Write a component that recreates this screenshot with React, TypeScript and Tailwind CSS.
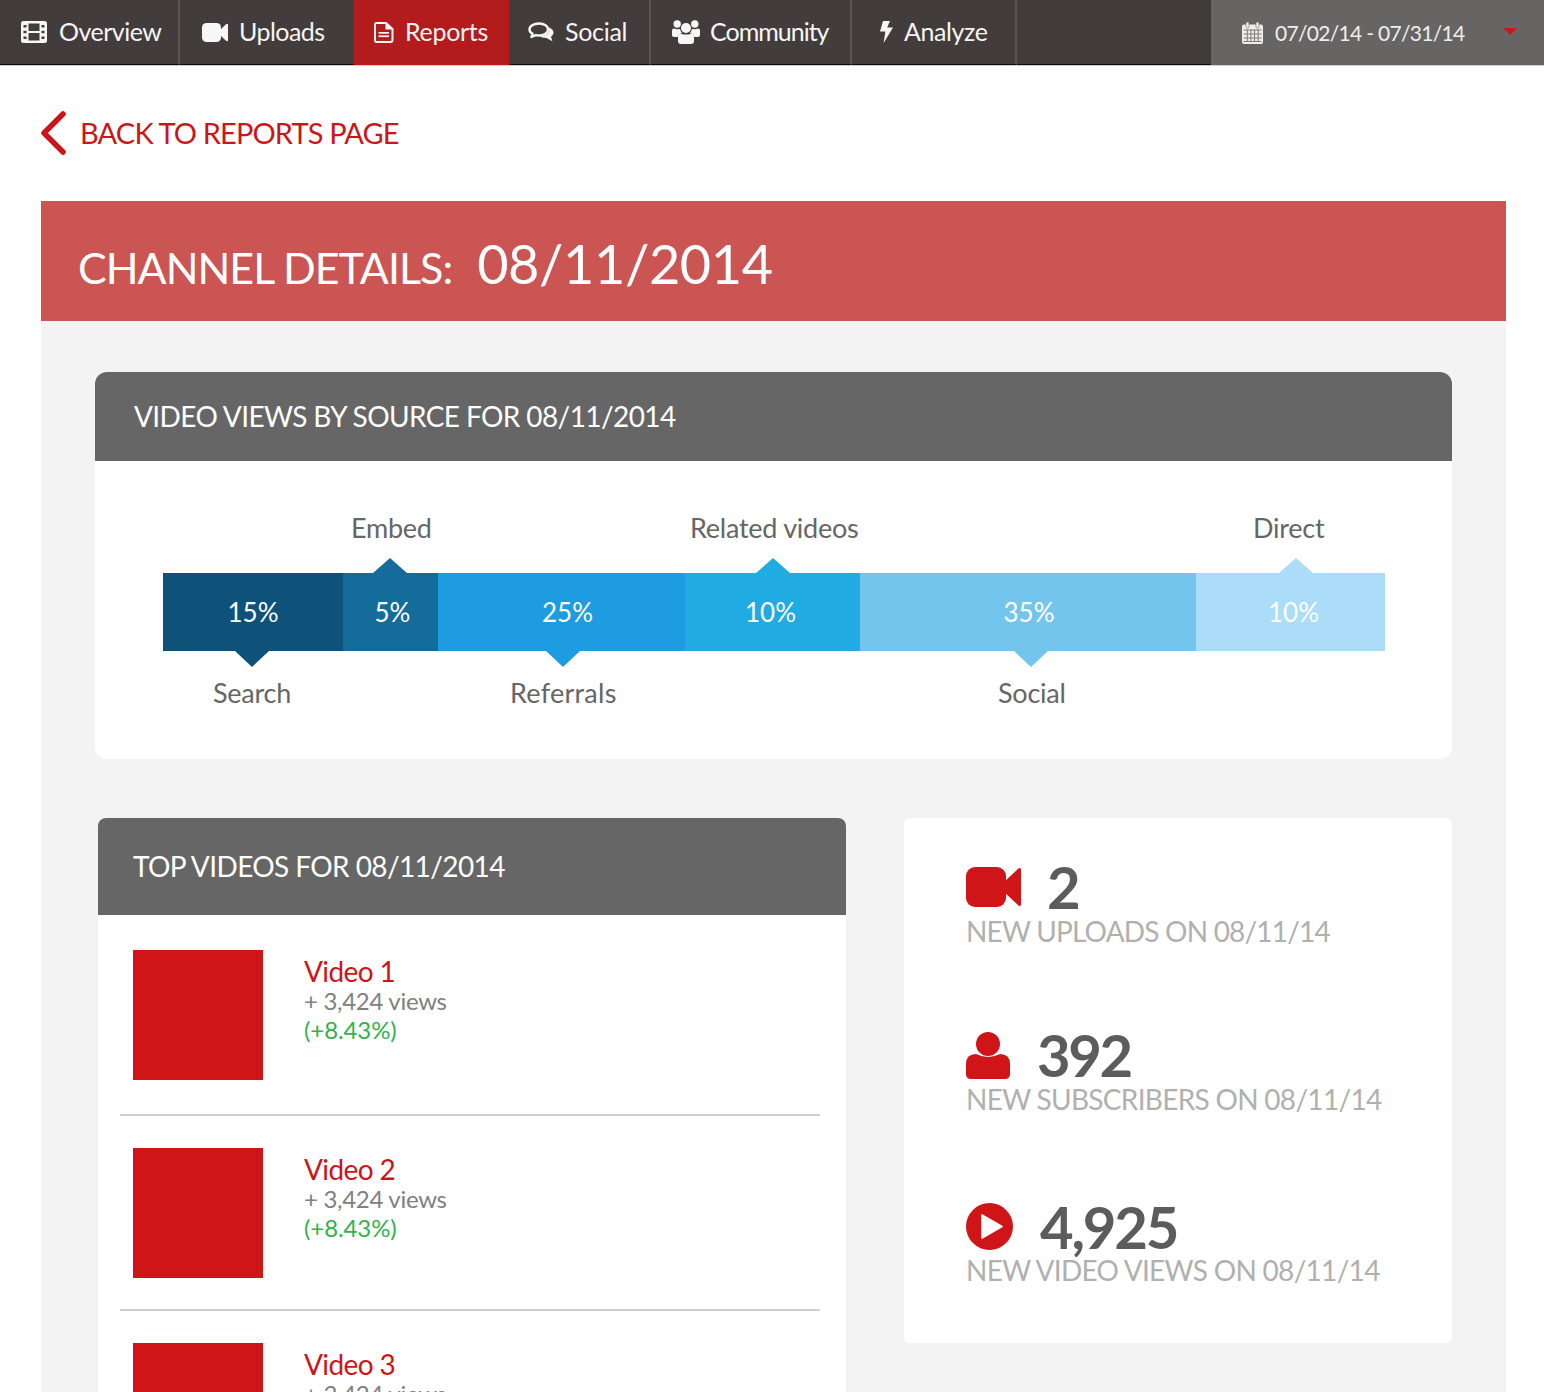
import React from "react";

const W = "#f7f7f7";
const D = "#423c3c";

const FilmIcon = () => (
  <svg width="26" height="22" viewBox="0 0 26 22" className="shrink-0">
    <rect x="0" y="0" width="26" height="22" rx="2.5" fill={W} />
    <rect x="7.5" y="2.5" width="11" height="7.5" fill={D} />
    <rect x="7.5" y="12" width="11" height="7.5" fill={D} />
    <rect x="2.5" y="4" width="3" height="2.5" fill={D} />
    <rect x="2.5" y="9.75" width="3" height="2.5" fill={D} />
    <rect x="2.5" y="15.5" width="3" height="2.5" fill={D} />
    <rect x="20.5" y="4" width="3" height="2.5" fill={D} />
    <rect x="20.5" y="9.75" width="3" height="2.5" fill={D} />
    <rect x="20.5" y="15.5" width="3" height="2.5" fill={D} />
  </svg>
);

const CamIcon = () => (
  <svg width="26" height="19" viewBox="0 0 26 19" className="shrink-0">
    <rect x="0" y="0" width="19" height="19" rx="4.5" fill={W} />
    <path d="M18 7 L24 1.2 Q26 0 26 2 L26 17 Q26 19 24 17.8 L18 12 Z" fill={W} />
  </svg>
);

const FileIcon = () => (
  <svg width="20" height="21" viewBox="0 0 20 21" className="shrink-0 mr-[-1px]">
    <path
      d="M2.5 1 H12 L18.5 7 V18 Q18.5 20 16.5 20 H2.5 Q1 20 1 18 V3 Q1 1 2.5 1 Z"
      fill="none"
      stroke={W}
      strokeWidth="2"
      strokeLinejoin="round"
    />
    <path d="M11.5 1 V7.5 H18.5 Z" fill={W} />
    <rect x="4.5" y="10" width="10.5" height="1.7" fill={W} />
    <rect x="4.5" y="13.4" width="10.5" height="1.7" fill={W} />
  </svg>
);

const CommentsIcon = () => (
  <svg width="26" height="20" viewBox="0 0 26 20" className="shrink-0">
    <path
      d="M11 1.5 C16.5 1.5 20 4.2 20 7.5 C20 10.8 16.5 13.5 11 13.5 C9.8 13.5 8.8 13.4 7.8 13.1 L3.5 15 L4.6 11.8 C2.6 10.6 1.5 9.2 1.5 7.5 C1.5 4.2 5.5 1.5 11 1.5 Z"
      fill="none"
      stroke={W}
      strokeWidth="2.4"
      strokeLinejoin="round"
    />
    <path
      d="M21.2 5.5 C24 6.7 25.5 8.4 25.5 10.6 C25.5 12.2 24.6 13.6 23 14.7 L24.4 19.2 L18.5 15.9 C15.5 15.9 13 15.2 11.5 14.5 C16.5 14.6 21.6 12 21.2 5.5 Z"
      fill={W}
    />
  </svg>
);

const UsersIcon = () => (
  <svg width="28" height="24" viewBox="0 0 28 24" className="shrink-0">
    <circle cx="5.2" cy="4" r="3.7" fill={W} />
    <circle cx="22.8" cy="4" r="3.7" fill={W} />
    <circle cx="14" cy="8" r="5" fill={W} />
    <path d="M0 10.5 Q0 8.6 2 8.6 Q5 10 8 8.8 Q8.4 11.5 10 13 Q6.5 13.6 5.6 17 H2 Q0 17 0 15 Z" fill={W} />
    <path d="M28 10.5 Q28 8.6 26 8.6 Q23 10 20 8.8 Q19.6 11.5 18 13 Q21.5 13.6 22.4 17 H26 Q28 17 28 15 Z" fill={W} />
    <path d="M8.5 13.4 Q14 15.8 19.5 13.4 Q22 13.6 22 17 V21 Q22 24 19 24 H9 Q6 24 6 21 V17 Q6 13.6 8.5 13.4 Z" fill={W} />
  </svg>
);

const BoltIcon = () => (
  <svg width="14" height="22" viewBox="0 0 14 22" className="shrink-0">
    <path d="M4 0 H11 L8.2 6.6 H14 L4.6 22 L6.4 10.6 H1 Z" fill={W} />
  </svg>
);

const CalendarIcon = () => (
  <svg width="21" height="22" viewBox="0 0 21 22" className="shrink-0">
    <rect x="0" y="2.5" width="21" height="19.5" rx="2" fill="#ededed" />
    <rect x="4" y="0" width="3" height="6" rx="1.4" fill="#ededed" stroke="#676563" strokeWidth="0.6" />
    <rect x="14" y="0" width="3" height="6" rx="1.4" fill="#ededed" stroke="#676563" strokeWidth="0.6" />
    <g fill="#7d7b79">
      <rect x="1.5" y="7.5" width="18" height="1" />
      <rect x="1.5" y="11.5" width="18" height="1" />
      <rect x="1.5" y="15.5" width="18" height="1" />
      <rect x="1.5" y="19" width="18" height="1" />
      <rect x="4.8" y="7.5" width="1" height="12.5" />
      <rect x="8.4" y="7.5" width="1" height="12.5" />
      <rect x="12" y="7.5" width="1" height="12.5" />
      <rect x="15.6" y="7.5" width="1" height="12.5" />
    </g>
  </svg>
);

const navItems = [
  { label: "Overview", w: "w-[180px]", pl: "pl-[21px]", gap: "gap-[12px]", track: "tracking-[-0.5px]", icon: <FilmIcon />, border: true },
  { label: "Uploads", w: "w-[174px]", pl: "pl-[22px]", gap: "gap-[11px]", track: "tracking-[-0.55px]", icon: <CamIcon />, border: false },
  { label: "Reports", w: "w-[155px]", pl: "pl-[20px]", gap: "gap-[12px]", track: "tracking-[-0.3px]", icon: <FileIcon />, border: false, active: true },
  { label: "Social", w: "w-[142px]", pl: "pl-[19px]", gap: "gap-[11px]", track: "tracking-[-0.3px]", icon: <CommentsIcon />, border: true },
  { label: "Community", w: "w-[201px]", pl: "pl-[21px]", gap: "gap-[10px]", track: "tracking-[-1px]", icon: <UsersIcon />, border: true },
  { label: "Analyze", w: "w-[165px]", pl: "pl-[27px]", gap: "gap-[11px]", track: "tracking-[-0.4px]", icon: <BoltIcon />, border: true },
];

const segments = [
  { pct: "15%", w: "w-[180px]", bg: "bg-[#0f5279]", pad: "" },
  { pct: "5%", w: "w-[95px]", bg: "bg-[#146c9b]", pad: "pl-[4px]" },
  { pct: "25%", w: "w-[247px]", bg: "bg-[#1e9ce1]", pad: "pl-[12px]" },
  { pct: "10%", w: "w-[175px]", bg: "bg-[#20ace2]", pad: "pr-[4px]" },
  { pct: "35%", w: "w-[336px]", bg: "bg-[#74c5ee]", pad: "pl-[2px]" },
  { pct: "10%", w: "w-[189px]", bg: "bg-[#abdcf8]", pad: "pl-[6px]" },
];

const videos = [
  { title: "Video 1", top: "pt-[35px]", bottom: "pb-[34px]" },
  { title: "Video 2", top: "pt-[32px]", bottom: "pb-[31px]" },
  { title: "Video 3", top: "pt-[32px]", bottom: "pb-[31px]" },
];

const Tick = ({ dir, color, left }: { dir: "up" | "down"; color: string; left: string }) => (
  <div
    className={`absolute w-0 h-0 border-l-[17px] border-r-[17px] border-l-transparent border-r-transparent ${left} ${
      dir === "up" ? "top-[-15px] border-b-[15px]" : "bottom-[-16px] border-t-[16px]"
    } ${color}`}
  />
);

export default function App() {
  return (
    <div className="h-[1392px] overflow-hidden bg-white font-['Lato','Open_Sans',sans-serif] flex flex-col">
      <nav className="h-[65px] shrink-0 flex bg-[#423c3c] shadow-[0_1px_0_#cccccc]">
        {navItems.map((n) => (
          <div
            key={n.label}
            className={`${n.w} ${n.pl} ${n.gap} ${n.track} h-full flex items-center text-[25px] text-[#f5f5f5] border-b ${
              n.active ? "bg-[#b31b1d] border-b-[#c01a1c]" : "border-b-[#0d0b0b]"
            } ${n.border ? "border-r-2 border-r-[#5a5555]" : ""}`}
          >
            {n.icon}
            <span>{n.label}</span>
          </div>
        ))}
        <div className="flex-1 border-b border-b-[#0d0b0b]" />
        <div className="w-[333px] h-full bg-[#676563] flex items-center pl-[31px] text-[#eeeeee] text-[21px] tracking-[-0.7px]">
          <CalendarIcon />
          <span className="ml-[12px]">07/02/14 - 07/31/14</span>
          <span className="ml-[39px] mb-[3px] w-0 h-0 border-l-[7px] border-r-[7px] border-t-[7px] border-l-transparent border-r-transparent border-t-[#c8161a]" />
        </div>
      </nav>

      <div className="h-[136px] shrink-0 flex items-start pl-[40px] pt-[46px]">
        <svg width="27" height="44" viewBox="0 0 27 44">
          <path d="M23 3 L4 22 L23 41" fill="none" stroke="#cc1518" strokeWidth="5.5" strokeLinejoin="round" strokeLinecap="round" />
        </svg>
        <span className="ml-[13px] mt-[1px] text-[29px] leading-[42px] text-[#cc1518] tracking-[-0.85px]">BACK TO REPORTS PAGE</span>
      </div>

      <div className="mx-[41px] w-[1465px] flex-1 bg-[#f3f3f3]">
        <div className="h-[120px] bg-[#cb5553] flex items-baseline pl-[37px] pt-[32px] text-white">
          <span className="text-[43px] leading-[70px] tracking-[-1px]">CHANNEL DETAILS:</span>
          <span className="ml-[25px] text-[54px] leading-[60px] tracking-[-0.4px]">08/11/2014</span>
        </div>

        <section className="mt-[51px] ml-[54px] w-[1357px] h-[387px] bg-white rounded-[12px] overflow-hidden">
          <div className="h-[89px] bg-[#666666] flex items-center pl-[39px] pb-[1px] text-[28px] tracking-[-0.6px] text-white">
            VIDEO VIEWS BY SOURCE FOR 08/11/2014
          </div>
          <div className="pl-[68px] pt-[47px] text-[#666666] text-[27px] tracking-[-0.25px]">
            <div className="relative h-[37px] w-[1222px]">
              <span className="absolute left-[188px] top-0">Embed</span>
              <span className="absolute left-[527px] top-0">Related videos</span>
              <span className="absolute left-[1090px] top-0">Direct</span>
            </div>
            <div className="relative mt-[28px] flex h-[78px] w-[1222px]">
              {segments.map((s) => (
                <div key={s.w + s.pct} className={`${s.w} ${s.bg} ${s.pad} flex items-center justify-center text-[26px] text-white tracking-normal`}>
                  {s.pct}
                </div>
              ))}
              <Tick dir="up" left="left-[210px]" color="border-b-[#146c9b]" />
              <Tick dir="up" left="left-[593px]" color="border-b-[#20ace2]" />
              <Tick dir="up" left="left-[1116px]" color="border-b-[#abdcf8]" />
              <Tick dir="down" left="left-[72px]" color="border-t-[#0f5279]" />
              <Tick dir="down" left="left-[383px]" color="border-t-[#1e9ce1]" />
              <Tick dir="down" left="left-[851px]" color="border-t-[#74c5ee]" />
            </div>
            <div className="relative mt-[22px] h-[34px] w-[1222px]">
              <span className="absolute left-[50px] top-0">Search</span>
              <span className="absolute left-[347px] top-0 tracking-[0.25px]">Referrals</span>
              <span className="absolute left-[835px] top-0">Social</span>
            </div>
          </div>
        </section>

        <div className="mt-[59px] flex items-start">
          <section className="ml-[57px] w-[748px] bg-white rounded-t-[8px] overflow-hidden">
            <div className="h-[97px] bg-[#666666] flex items-center pl-[35px] pb-[1px] text-[28px] tracking-[-0.6px] text-white">
              TOP VIDEOS FOR 08/11/2014
            </div>
            <div className="pl-[22px] pr-[26px]">
              {videos.map((v, i) => (
                <div key={v.title} className={`flex ${v.top} ${v.bottom} ${i < 2 ? "border-b-2 border-b-[#cfcfcf]" : ""}`}>
                  <div className="ml-[13px] w-[130px] h-[130px] bg-[#cf1518]" />
                  <div className="ml-[41px] pt-[5px]">
                    <div className="text-[28px] leading-[32px] text-[#cc1518] tracking-[-0.6px]">{v.title}</div>
                    <div className="text-[24px] leading-[28px] text-[#808080] tracking-[-0.3px]">+ 3,424 views</div>
                    <div className="text-[24px] leading-[28px] text-[#2fb34a] tracking-[-0.1px] mt-[1px]">(+8.43%)</div>
                  </div>
                </div>
              ))}
            </div>
          </section>

          <section className="ml-[58px] w-[548px] h-[525px] bg-white rounded-[6px] pl-[62px] pt-[42px]">
            <div className="h-[168px]">
              <div className="flex items-center h-[54px]">
                <svg width="56" height="40" viewBox="0 0 56 40" className="shrink-0">
                  <rect x="0" y="0" width="40" height="40" rx="9" fill="#cf1518" />
                  <path d="M39 14 L52.5 1.5 Q55 0 55 3 L55 37 Q55 40 52.5 38.5 L39 26 Z" fill="#cf1518" />
                </svg>
                <span className="ml-[25px] text-[58px] leading-[54px] font-bold text-[#5c5c5c] tracking-[-2px]">2</span>
              </div>
              <div className="text-[28px] leading-[34px] text-[#b0b0b0] tracking-[-0.8px]">NEW UPLOADS ON 08/11/14</div>
            </div>
            <div className="h-[171px]">
              <div className="flex items-center h-[54px]">
                <svg width="44" height="47" viewBox="0 0 44 47" className="shrink-0">
                  <circle cx="22" cy="12" r="12" fill="#cf1518" />
                  <path d="M0 32 Q0 22 10 22 Q22 28 34 22 Q44 22 44 32 L44 42 Q44 47 39 47 L5 47 Q0 47 0 42 Z" fill="#cf1518" />
                </svg>
                <span className="ml-[27px] text-[58px] leading-[54px] font-bold text-[#5c5c5c] tracking-[-2.4px]">392</span>
              </div>
              <div className="text-[28px] leading-[34px] text-[#b0b0b0] tracking-[-0.7px]">NEW SUBSCRIBERS ON 08/11/14</div>
            </div>
            <div>
              <div className="flex items-center h-[54px]">
                <svg width="47" height="47" viewBox="0 0 47 47" className="shrink-0">
                  <circle cx="23.5" cy="23.5" r="23.5" fill="#cf1518" />
                  <path d="M16 12 L36 23.5 L16 35 Z" fill="#ffffff" stroke="#ffffff" strokeWidth="1.5" strokeLinejoin="round" />
                </svg>
                <span className="ml-[27px] pt-[1px] text-[58px] leading-[54px] font-bold text-[#5c5c5c] tracking-[-2.2px]">4,925</span>
              </div>
              <div className="text-[28px] leading-[34px] text-[#b0b0b0] tracking-[-0.7px]">NEW VIDEO VIEWS ON 08/11/14</div>
            </div>
          </section>
        </div>
      </div>
    </div>
  );
}
